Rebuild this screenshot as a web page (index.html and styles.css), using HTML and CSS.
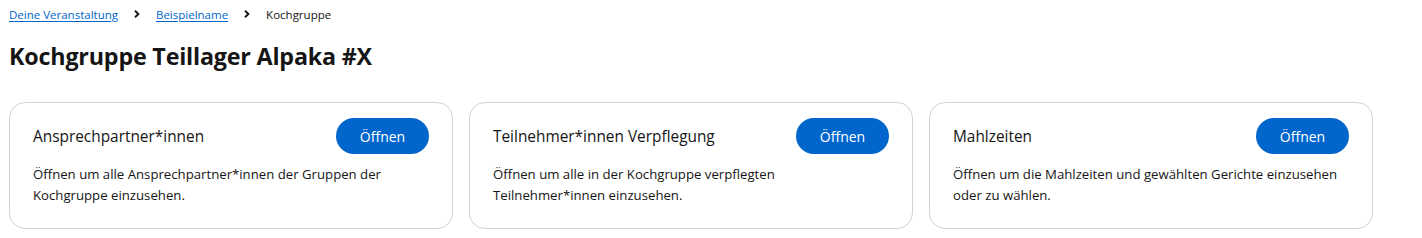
FILE: index.html
```html
<!DOCTYPE html>
<html lang="de">
<head>
<meta charset="utf-8">
<title>Kochgruppe Teillager Alpaka #X</title>
<link rel="stylesheet" href="styles.css">
</head>
<body>
<nav class="breadcrumb">
  <a href="#" class="crumb-link">Deine Veranstaltung</a>
  <span class="sep"><svg viewBox="0 0 6 8" width="6" height="8"><path d="M1 0.8 L4.4 4 L1 7.2" fill="none" stroke="#151515" stroke-width="1.9"/></svg></span>
  <a href="#" class="crumb-link">Beispielname</a>
  <span class="sep"><svg viewBox="0 0 6 8" width="6" height="8"><path d="M1 0.8 L4.4 4 L1 7.2" fill="none" stroke="#151515" stroke-width="1.9"/></svg></span>
  <span class="crumb-current">Kochgruppe</span>
</nav>
<h1 class="title">Kochgruppe Teillager Alpaka #X</h1>
<div class="cards">
  <div class="card">
    <div class="card-head">
      <h2 class="card-title">Ansprechpartner*innen</h2>
      <button class="btn">Öffnen</button>
    </div>
    <p class="card-body">Öffnen um alle Ansprechpartner*innen der Gruppen der Kochgruppe einzusehen.</p>
  </div>
  <div class="card">
    <div class="card-head">
      <h2 class="card-title">Teilnehmer*innen Verpflegung</h2>
      <button class="btn">Öffnen</button>
    </div>
    <p class="card-body">Öffnen um alle in der Kochgruppe verpflegten Teilnehmer*innen einzusehen.</p>
  </div>
  <div class="card">
    <div class="card-head">
      <h2 class="card-title">Mahlzeiten</h2>
      <button class="btn">Öffnen</button>
    </div>
    <p class="card-body">Öffnen um die Mahlzeiten und gewählten Gerichte einzusehen oder zu wählen.</p>
  </div>
</div>
</body>
</html>
```
FILE: styles.css
```css
* { box-sizing: border-box; }
body {
  margin: 0;
  padding: 0 0 0 9px;
  background: #fff;
  color: #151515;
  font-family: "Open Sans", "Noto Sans", sans-serif;
}
.breadcrumb {
  display: flex;
  align-items: center;
  height: 28px;
  font-size: 11.5px;
}
.crumb-link {
  color: #0066cc;
  text-decoration: underline;
  text-underline-offset: 2px;
}
.sep {
  display: inline-flex;
  align-items: center;
  margin: 0 16px 0 16px;
}
.crumb-current { color: #151515; }
.title {
  margin: 12px 0 0 0;
  font-size: 23.3px;
  font-weight: 700;
  line-height: 32px;
  letter-spacing: -0.2px;
}
.cards {
  display: grid;
  grid-template-columns: repeat(3, 444px);
  column-gap: 16px;
  margin-top: 30px;
}
.card {
  border: 1px solid #d2d2d2;
  border-radius: 16px;
  padding: 15px 23px 22px 23px;
  height: 127px;
}
.card-head {
  display: flex;
  align-items: center;
  justify-content: space-between;
}
.card-title {
  margin: 0;
  font-size: 15.4px;
  font-weight: 500;
}
.btn {
  width: 93px;
  height: 36px;
  border: none;
  border-radius: 18px;
  background: #0066cc;
  color: #fff;
  font-family: inherit;
  font-size: 14px;
}
.card-body {
  margin: 10px 0 0 0;
  font-size: 13.2px;
  line-height: 21px;
}
```
